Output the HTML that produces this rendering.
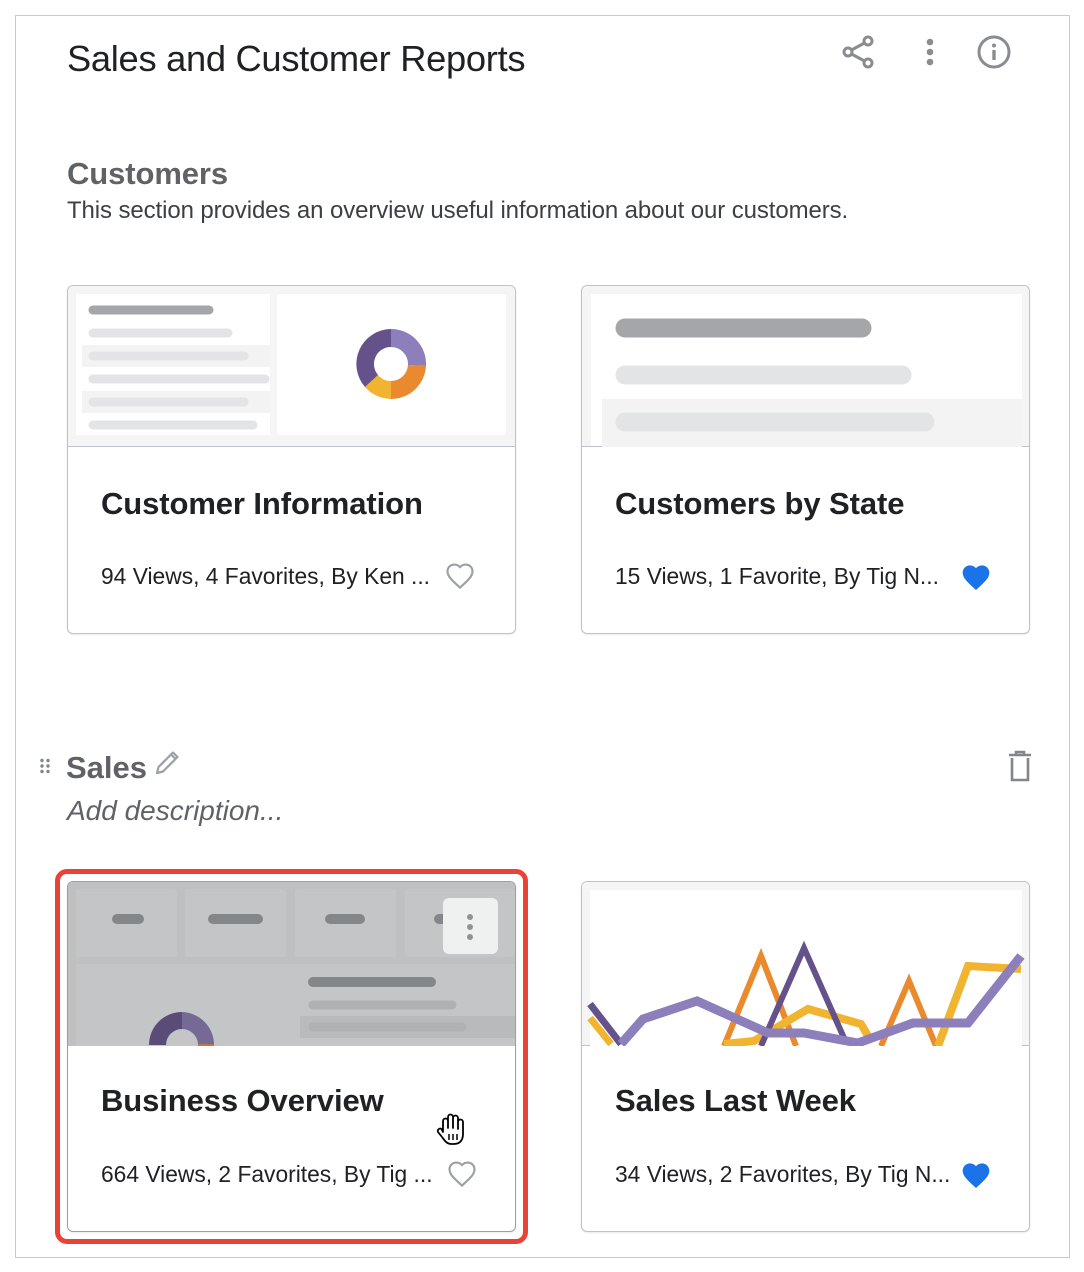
<!DOCTYPE html>
<html><head><meta charset="utf-8"><style>
*{margin:0;padding:0;box-sizing:border-box}
body{width:1084px;height:1272px;background:#fff;position:relative;font-family:"Liberation Sans",Arial,sans-serif;overflow:hidden}
.abs{position:absolute}
.frame{left:15px;top:15px;width:1055px;height:1243px;border:1.5px solid #c8cacc}
.card{position:absolute;width:449px;height:349px;border:1.5px solid #bfc3c8;border-radius:6px;background:#fff;overflow:hidden;box-shadow:0 1px 2px rgba(0,0,0,.08)}
.thumb{position:absolute;left:0;top:0;width:100%;height:161px;background:#f5f5f5;border-bottom:1.5px solid #bfc3c8}
.title{position:absolute;left:33px;top:200px;font-size:31px;font-weight:bold;color:#202124;white-space:nowrap;letter-spacing:-0.1px}
.meta{position:absolute;left:33px;top:277px;font-size:22.8px;color:#202124;white-space:nowrap}
.heart{position:absolute;top:276px}
</style></head><body>
<div class="abs frame"></div>
<div class="abs" style="left:67px;top:38px;font-size:36.3px;color:#202124;letter-spacing:-0.3px">Sales and Customer Reports</div>
<svg class="abs" style="left:838px;top:33px" width="40" height="40" viewBox="0 0 40 40" fill="none" stroke="#8a8d90" stroke-width="3"><circle cx="30" cy="8" r="4"/><circle cx="10" cy="19" r="4"/><circle cx="30" cy="30" r="4"/><path d="M13.5 17L26.5 10M13.5 21L26.5 28"/></svg>
<svg class="abs" style="left:920px;top:36px" width="20" height="34"><g fill="#8a8d90"><circle cx="10" cy="6" r="3.3"/><circle cx="10" cy="16" r="3.3"/><circle cx="10" cy="26" r="3.3"/></g></svg>
<svg class="abs" style="left:975px;top:34px" width="38" height="38" viewBox="0 0 38 38"><circle cx="19" cy="18" r="15" fill="none" stroke="#8a8d90" stroke-width="3"/><rect x="17.3" y="16" width="3.4" height="10" fill="#8a8d90"/><circle cx="19" cy="11.5" r="2" fill="#8a8d90"/></svg>

<div class="abs" style="left:67px;top:156px;font-size:31px;color:#5f6368;font-weight:bold;letter-spacing:-0.1px">Customers</div>
<div class="abs" style="left:67px;top:197px;font-size:24px;color:#3c4043;letter-spacing:-0.1px">This section provides an overview useful information about our customers.</div>

<!-- card 1 -->
<div class="card" style="left:67px;top:285px">
<div class="thumb">
<svg width="449" height="161" style="position:absolute;left:0;top:0">
<rect x="8" y="8" width="194" height="141" fill="#fff"/>
<rect x="209" y="8" width="229" height="141" rx="3" fill="#fff"/>
<rect x="14" y="59" width="188" height="22" fill="#f3f3f3"/>
<rect x="14" y="105" width="188" height="22" fill="#f3f3f3"/>
<g stroke-linecap="round" stroke-width="9">
<line x1="25" y1="24" x2="141" y2="24" stroke="#a5a6a9"/>
<line x1="25" y1="47" x2="160" y2="47" stroke="#e3e4e6"/>
<line x1="25" y1="70" x2="176" y2="70" stroke="#e3e4e6"/>
<line x1="25" y1="93" x2="197" y2="93" stroke="#e3e4e6"/>
<line x1="25" y1="116" x2="176" y2="116" stroke="#e3e4e6"/>
<line x1="25" y1="139" x2="185" y2="139" stroke="#e3e4e6"/>
</g>
<g transform="translate(323,78)">
<path d="M0 -35 A35 35 0 0 1 35 2 L17 1 A17 17 0 0 0 0 -17Z" fill="#8c7fbb"/>
<path d="M35 2 A35 35 0 0 1 0 35 L0 17 A17 17 0 0 0 17 1Z" fill="#ea8a2e"/>
<path d="M0 35 A35 35 0 0 1 -26 23 L-13 11 A17 17 0 0 0 0 17Z" fill="#f1b431"/>
<path d="M-26 23 A35 35 0 0 1 0 -35 L0 -17 A17 17 0 0 0 -13 11Z" fill="#65528b"/>
</g>
</svg>
</div>
<div class="title">Customer Information</div>
<div class="meta">94 Views, 4 Favorites, By Ken ...</div>
<svg class="heart" style="left:376px" width="32" height="30" viewBox="0 0 24 24"><path d="M12 20.5l-1.4-1.3C5.4 14.4 2 11.3 2 7.5 2 4.4 4.4 2 7.5 2c1.7 0 3.4.8 4.5 2.1C13.1 2.8 14.8 2 16.5 2 19.6 2 22 4.4 22 7.5c0 3.8-3.4 6.9-8.6 11.7z" fill="none" stroke="#9aa0a6" stroke-width="1.7"/></svg>
</div>

<!-- card 2 -->
<div class="card" style="left:581px;top:285px">
<div class="thumb">
<svg width="449" height="161" style="position:absolute;left:0;top:0">
<rect x="9" y="8" width="431" height="152" fill="#fff"/>
<rect x="20" y="113" width="420" height="48" fill="#f3f3f3"/>
<g stroke-linecap="round" stroke-width="19">
<line x1="43" y1="42" x2="280" y2="42" stroke="#a5a6a9"/>
<line x1="43" y1="89" x2="320" y2="89" stroke="#e3e4e6"/>
<line x1="43" y1="136" x2="343" y2="136" stroke="#e3e4e6"/>
</g>
</svg>
</div>
<div class="title">Customers by State</div>
<div class="meta">15 Views, 1 Favorite, By Tig N...</div>
<svg class="heart" style="left:377px" width="34" height="32" viewBox="0 0 24 24"><path d="M12 21l-1.4-1.3C5.4 15 2 11.9 2 8 2 4.9 4.4 2.5 7.5 2.5c1.7 0 3.4.8 4.5 2.1 1.1-1.3 2.8-2.1 4.5-2.1 3.1 0 5.5 2.4 5.5 5.5 0 3.9-3.4 7-8.6 11.7z" fill="#1a73e8"/></svg>
</div>

<!-- Sales section -->
<svg class="abs" style="left:39px;top:758px" width="12" height="16"><g fill="#80868b"><circle cx="3" cy="2.5" r="1.7"/><circle cx="9" cy="2.5" r="1.7"/><circle cx="3" cy="8" r="1.7"/><circle cx="9" cy="8" r="1.7"/><circle cx="3" cy="13.5" r="1.7"/><circle cx="9" cy="13.5" r="1.7"/></g></svg>
<div class="abs" style="left:66px;top:750px;font-size:31px;color:#5f6368;font-weight:bold">Sales</div>
<svg class="abs" style="left:153px;top:747px" width="30" height="30" viewBox="0 0 30 30"><path d="M4 26l1.5-6L20 5.5l4.5 4.5L10 24.5z M18 7.5l4.5 4.5" fill="none" stroke="#9aa0a6" stroke-width="2.2" stroke-linejoin="round"/></svg>
<div class="abs" style="left:67px;top:795px;font-size:28px;color:#5f6368;font-style:italic">Add description...</div>
<svg class="abs" style="left:1006px;top:749px" width="28" height="34" viewBox="0 0 28 34"><path d="M3 6h22M10 6V3h8v3M6 9v22h16V9" fill="none" stroke="#80868b" stroke-width="2.6"/></svg>

<!-- red highlight -->
<div class="abs" style="left:55px;top:869px;width:473px;height:375px;border:5px solid #ea4335;border-radius:12px"></div>

<!-- card 3 -->
<div class="card" style="left:67px;top:881px;width:449px;height:351px;border-color:#9aa0a6">
<div class="thumb" style="height:164px;background:#bfc0c2;border-color:#bfc3c8">
<svg width="449" height="164" style="position:absolute;left:0;top:0">
<rect x="8" y="7" width="101" height="68" rx="3" fill="#c4c5c7"/>
<rect x="117" y="7" width="101" height="68" rx="3" fill="#c4c5c7"/>
<rect x="227" y="7" width="101" height="68" rx="3" fill="#c4c5c7"/>
<rect x="337" y="7" width="110" height="68" rx="3" fill="#c4c5c7"/>
<rect x="8" y="82" width="441" height="82" fill="#c4c5c7"/>
<rect x="232" y="134" width="217" height="22" fill="#b9babc"/>
<g stroke-linecap="round" stroke-width="10" stroke="#848789">
<line x1="49" y1="37" x2="71" y2="37"/><line x1="145" y1="37" x2="190" y2="37"/><line x1="262" y1="37" x2="292" y2="37"/><line x1="371" y1="37" x2="380" y2="37"/>
<line x1="245" y1="100" x2="363" y2="100"/>
</g>
<g stroke-linecap="round" stroke-width="9" stroke="#afb1b3"><line x1="245" y1="123" x2="384" y2="123"/><line x1="245" y1="145" x2="394" y2="145"/></g>
<g transform="translate(114,163)">
<path d="M0 -33 A33 33 0 0 1 32 -1 L16 -1 A16 16 0 0 0 0 -16Z" fill="#746a95"/>
<path d="M32 -1 A33 33 0 0 1 31 8 L15 5 A16 16 0 0 0 16 -1Z" fill="#b87a3c"/>
<path d="M0 -33 A33 33 0 0 0 -33 0 L-16 0 A16 16 0 0 1 0 -16Z" fill="#594c78"/>
</g>
<rect x="375" y="16" width="55" height="56" rx="6" fill="#eff0f0"/>
<g fill="#909294"><circle cx="402" cy="35" r="3"/><circle cx="402" cy="45" r="3"/><circle cx="402" cy="55" r="3"/></g>
</svg>
</div>
<div class="title" style="top:201px">Business Overview</div>
<div class="meta" style="top:279px">664 Views, 2 Favorites, By Tig ...</div>
<svg class="heart" style="left:378px;top:278px" width="32" height="30" viewBox="0 0 24 24"><path d="M12 20.5l-1.4-1.3C5.4 14.4 2 11.3 2 7.5 2 4.4 4.4 2 7.5 2c1.7 0 3.4.8 4.5 2.1C13.1 2.8 14.8 2 16.5 2 19.6 2 22 4.4 22 7.5c0 3.8-3.4 6.9-8.6 11.7z" fill="none" stroke="#9aa0a6" stroke-width="1.7"/></svg>
<svg class="abs" style="left:366px;top:230px" width="34" height="36" viewBox="0 0 34 36"><path d="M9 20V9a2.5 2.5 0 0 1 5 0v7V5a2.5 2.5 0 0 1 5 0v11V6a2.5 2.5 0 0 1 5 0v11-7a2.5 2.5 0 0 1 5 0v12c0 6-3 10-9 10h-3c-4 0-6-3-9-7l-4-5a2.4 2.4 0 0 1 3.5-3z" fill="#fff" stroke="#000" stroke-width="1.8" stroke-linejoin="round"/><path d="M15 22v6M19 22v6M23 22v6" stroke="#000" stroke-width="1.5"/></svg>
</div>

<!-- card 4 -->
<div class="card" style="left:581px;top:881px;width:449px;height:351px">
<div class="thumb" style="height:164px">
<svg width="449" height="164" style="position:absolute;left:0;top:0">
<rect x="8" y="8" width="432" height="160" fill="#fff"/>
<g fill="none" stroke-linejoin="miter">
<polyline points="142,164 179,74 214,164" stroke="#ea8a2e" stroke-width="6"/>
<polyline points="299,164 327,99 354,164" stroke="#ea8a2e" stroke-width="6"/>
<polyline points="8,136 29,162" stroke="#f1b431" stroke-width="7"/>
<polyline points="142,162 172,159 226,127 279,142 289,159" stroke="#f1b431" stroke-width="8"/>
<polyline points="356,164 386,84 439,87" stroke="#f1b431" stroke-width="8"/>
<polyline points="8,122 39,162" stroke="#65528b" stroke-width="7"/>
<polyline points="179,164 222,66 262,156" stroke="#65528b" stroke-width="6"/>
<polyline points="39,162 61,137 115,119 186,151 222,151 276,161 331,141 386,141 439,74" stroke="#8c7fbb" stroke-width="9"/>
</g>
</svg>
</div>
<div class="title" style="top:201px">Sales Last Week</div>
<div class="meta" style="top:279px">34 Views, 2 Favorites, By Tig N...</div>
<svg class="heart" style="left:377px;top:278px" width="34" height="32" viewBox="0 0 24 24"><path d="M12 21l-1.4-1.3C5.4 15 2 11.9 2 8 2 4.9 4.4 2.5 7.5 2.5c1.7 0 3.4.8 4.5 2.1 1.1-1.3 2.8-2.1 4.5-2.1 3.1 0 5.5 2.4 5.5 5.5 0 3.9-3.4 7-8.6 11.7z" fill="#1a73e8"/></svg>
</div>
</body></html>
